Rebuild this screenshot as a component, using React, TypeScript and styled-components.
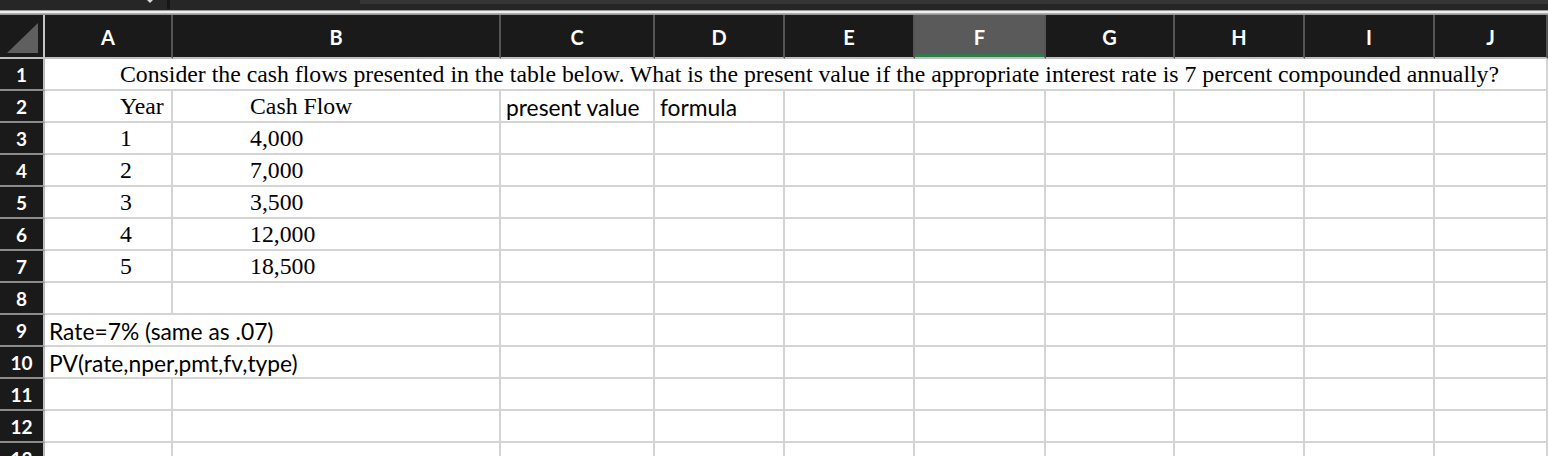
import React from 'react';
import styled, { createGlobalStyle, css } from 'styled-components';

const GlobalStyle = createGlobalStyle`
  html, body {
    margin: 0;
    padding: 0;
    background: #ffffff;
  }

  body {
    width: 1548px;
    height: 456px;
    overflow: hidden;
  }
`;

const COLUMNS = ['A', 'B', 'C', 'D', 'E', 'F', 'G', 'H', 'I', 'J'];
const SELECTED_COLUMN = 'F';

type CellFont = 'serif' | 'sans';

interface CellData {
  text?: string;
  span?: number;
  font?: CellFont;
  indent?: number;
}

const SERIF_A = { font: 'serif' as CellFont, indent: 75 };
const SERIF_B = { font: 'serif' as CellFont, indent: 77 };

const cashFlows: [string, string][] = [
  ['1', '4,000'],
  ['2', '7,000'],
  ['3', '3,500'],
  ['4', '12,000'],
  ['5', '18,500'],
];

const emptyRow = (from: number): CellData[] =>
  Array.from({ length: COLUMNS.length - from }, () => ({}));

const rows: CellData[][] = [
  [
    {
      text:
        'Consider the cash flows presented in the table below. What is the present value if the appropriate interest rate is 7 percent compounded annually?',
      span: 10,
      ...SERIF_A,
    },
  ],
  [
    { text: 'Year', ...SERIF_A },
    { text: 'Cash Flow', ...SERIF_B },
    { text: 'present value', font: 'sans', indent: 5 },
    { text: 'formula', font: 'sans', indent: 5 },
    ...emptyRow(4),
  ],
  ...cashFlows.map(([year, flow]) => [
    { text: year, ...SERIF_A },
    { text: flow, ...SERIF_B },
    ...emptyRow(2),
  ]),
  emptyRow(0),
  [{ text: 'Rate=7% (same as .07)', span: 2, font: 'sans' as CellFont, indent: 4 }, ...emptyRow(2)],
  [{ text: 'PV(rate,nper,pmt,fv,type)', span: 2, font: 'sans' as CellFont, indent: 4 }, ...emptyRow(2)],
  emptyRow(0),
  emptyRow(0),
  emptyRow(0),
];

function App() {
  return (
    <>
      <GlobalStyle />
      <Window>
        <TopStrip>
          <NameBox>
            {/* dropdown caret of the name box, mostly scrolled off the top */}
            <svg width="8" height="4" viewBox="0 0 8 4">
              <polygon points="1,0 7,0 4,3" fill="#d8d8d8" />
            </svg>
          </NameBox>
          <StripDivider />
          <StripGap />
          <FormulaBar />
        </TopStrip>
        <Bevel />

        <Sheet>
          <Corner>
            <svg width="31" height="30" viewBox="0 0 31 30">
              <polygon points="31,0 31,30 0,30" fill="#5f5f5f" />
            </svg>
          </Corner>
          {COLUMNS.map((col) => (
            <ColHeader key={col} $selected={col === SELECTED_COLUMN}>
              {col}
            </ColHeader>
          ))}

          {rows.map((cells, r) => (
            <React.Fragment key={r}>
              <RowHeader>{r + 1}</RowHeader>
              {cells.map((cell, c) => (
                <Cell
                  key={c}
                  $span={cell.span ?? 1}
                  $font={cell.font ?? 'sans'}
                  $indent={cell.indent ?? 4}
                >
                  {cell.text}
                </Cell>
              ))}
            </React.Fragment>
          ))}
        </Sheet>
      </Window>
    </>
  );
}

const Window = styled.div`
  width: 1548px;
  height: 456px;
  overflow: hidden;
  background: #ffffff;
`;

const TopStrip = styled.div`
  display: flex;
  height: 10px;
  background: #262626;
`;

const NameBox = styled.div`
  display: flex;
  align-items: flex-start;
  justify-content: flex-end;
  width: 167px;
  padding-right: 13px;
  box-sizing: border-box;
`;

const StripDivider = styled.div`
  width: 3px;
  height: 9px;
  background: #161616;
`;

const StripGap = styled.div`
  width: 190px;
`;

const FormulaBar = styled.div`
  flex: 1;
  border-top: 4px solid #353535;
`;

const Bevel = styled.div`
  height: 5px;
  background: linear-gradient(#9c9c9c 0, #9c9c9c 1px, #f0f0f0 1px, #ececec 3px, #b8b8b8 3px, #8a8a8a 5px);
`;

const Sheet = styled.div`
  display: grid;
  grid-template-columns: 45px 128px 328px 154px 130px 130px 131px 129px 130px 130px 1fr;
  grid-template-rows: 44px;
  grid-auto-rows: 32px;
`;

const headerText = css`
  font-family: Lato, 'Open Sans', sans-serif;
  font-weight: 700;
  color: #ffffff;
`;

const Corner = styled.div`
  box-sizing: border-box;
  display: flex;
  align-items: flex-end;
  justify-content: flex-end;
  padding: 0 5px 4px 0;
  background: #1a1a1a;
  border-right: 2px solid #c4c4c4;
  border-bottom: 2px solid #c0c0c0;
`;

const ColHeader = styled.div<{ $selected: boolean }>`
  ${headerText}
  box-sizing: border-box;
  display: flex;
  align-items: center;
  justify-content: center;
  padding-top: 2px;
  font-size: 20px;
  background: ${({ $selected }) => ($selected ? '#5a5a5a' : '#1a1a1a')};
  border-right: 2px solid #555555;
  border-bottom: 2px solid #c0c0c0;
  box-shadow: ${({ $selected }) => ($selected ? 'inset 0 -3px 0 #2e7a4b' : 'none')};
`;

const RowHeader = styled.div`
  ${headerText}
  box-sizing: border-box;
  display: flex;
  align-items: center;
  justify-content: center;
  font-size: 19px;
  background: #1a1a1a;
  border-right: 2px solid #bdbdbd;
  border-bottom: 2px solid #8c8c8c;
`;

const Cell = styled.div<{ $span: number; $font: CellFont; $indent: number }>`
  box-sizing: border-box;
  display: flex;
  align-items: flex-end;
  grid-column: span ${({ $span }) => $span};
  padding-left: ${({ $indent }) => $indent}px;
  white-space: nowrap;
  color: #000000;
  border-right: 2px solid #d4d4d4;
  border-bottom: 2px solid #d4d4d4;
  line-height: 1;

  ${({ $font }) =>
    $font === 'serif'
      ? css`
          font-family: 'Liberation Serif', 'Times New Roman', serif;
          font-size: 23.75px;
          padding-bottom: 2px;
        `
      : css`
          font-family: Lato, 'Liberation Sans', sans-serif;
          font-size: 22.8px;
          padding-bottom: 2px;
        `}
`;

export default App;
